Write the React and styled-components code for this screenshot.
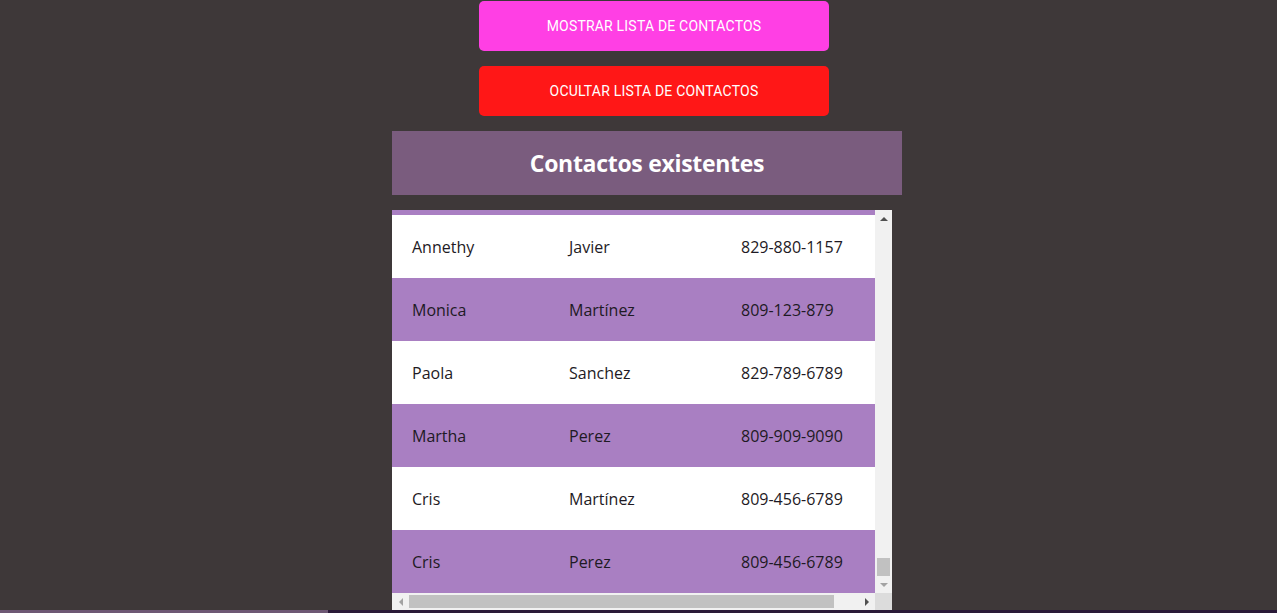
import { useEffect, useRef } from 'react';
import styled, { createGlobalStyle, css } from 'styled-components';

const contactos = [
  { nombre: 'Annethy', apellido: 'Javier', telefono: '829-880-1157' },
  { nombre: 'Monica', apellido: 'Martínez', telefono: '809-123-879' },
  { nombre: 'Paola', apellido: 'Sanchez', telefono: '829-789-6789' },
  { nombre: 'Martha', apellido: 'Perez', telefono: '809-909-9090' },
  { nombre: 'Cris', apellido: 'Martínez', telefono: '809-456-6789' },
  { nombre: 'Cris', apellido: 'Perez', telefono: '809-456-6789' },
];

// la lista se repite muchas veces, como en la captura (barra de scroll mínima)
const filas = [];
for (let i = 0; i < 21; i++) {
  filas.push(...contactos);
}

export default function App() {
  const scrollRef = useRef(null);

  useEffect(() => {
    if (scrollRef.current) {
      scrollRef.current.scrollTop = scrollRef.current.scrollHeight;
      scrollRef.current.scrollLeft = 0;
    }
  }, []);

  return (
    <>
      <GlobalStyle />
      <Page>
        <Column>
          <Boton color="#ff3fe4">Mostrar lista de contactos</Boton>
          <Boton color="#ff1717">Ocultar lista de contactos</Boton>
          <Titulo>
            <h1>Contactos existentes</h1>
          </Titulo>
          <ScrollBox>
            <Viewport ref={scrollRef}>
              <Tabla>
                <colgroup>
                  <col style={{ width: 157 }} />
                  <col style={{ width: 172 }} />
                  <col style={{ width: 181 }} />
                </colgroup>
                <tbody>
                  {filas.map((c, i) => (
                    <Fila key={i}>
                      <Celda>{c.nombre}</Celda>
                      <Celda>{c.apellido}</Celda>
                      <Celda>{c.telefono}</Celda>
                    </Fila>
                  ))}
                </tbody>
              </Tabla>
            </Viewport>
            <BarraV>
              <Flecha><Triangulo dir="up" /></Flecha>
              <Pista vertical>
                <ThumbV />
              </Pista>
              <Flecha><Triangulo dir="down" disabled /></Flecha>
            </BarraV>
            <BarraH>
              <Flecha><Triangulo dir="left" disabled /></Flecha>
              <Pista>
                <ThumbH />
              </Pista>
              <Flecha><Triangulo dir="right" /></Flecha>
            </BarraH>
            <Esquina />
          </ScrollBox>
        </Column>
        <Footer>
          <FooterIzq />
          <FooterDer />
        </Footer>
      </Page>
    </>
  );
}

const GlobalStyle = createGlobalStyle`
  * {
    box-sizing: border-box;
  }
  html, body {
    margin: 0;
    padding: 0;
    background-color: #3e3839;
    overflow: hidden;
  }
`;

const Page = styled.div`
  display: flex;
  flex-direction: column;
  padding-top: 1px;
  min-height: 613px;
`;

const Column = styled.div`
  width: 510px;
  margin-left: 392px;
  display: flex;
  flex-direction: column;
  gap: 15px;
`;

const Boton = styled.button`
  width: 350px;
  height: 50px;
  margin-left: 87px;
  border: none;
  border-radius: 5px;
  background-color: ${(props) => props.color};
  color: #ffffff;
  font-family: 'Roboto', sans-serif;
  font-size: 14px;
  font-weight: 400;
  letter-spacing: 0.2px;
  text-transform: uppercase;
  cursor: pointer;
`;

const Titulo = styled.div`
  width: 510px;
  height: 64px;
  background-color: #7a5c7e;
  display: flex;
  align-items: center;
  justify-content: center;

  h1 {
    margin: 0;
    font-family: 'Open Sans', sans-serif;
    font-weight: 700;
    font-size: 23px;
    color: #ffffff;
    letter-spacing: -0.3px;
  }
`;

const ScrollBox = styled.div`
  width: 500px;
  height: 400px;
  display: grid;
  grid-template-columns: 483px 17px;
  grid-template-rows: 383px 17px;
  background-color: #f1f1f1;
`;

const Viewport = styled.div`
  overflow: hidden;
  background-color: #ffffff;
`;

const BarraV = styled.div`
  display: flex;
  flex-direction: column;
  background-color: #f1f1f1;
`;

const BarraH = styled.div`
  display: flex;
  background-color: #f1f1f1;
`;

const Esquina = styled.div`
  background-color: #dcdcdc;
`;

const Flecha = styled.div`
  width: 17px;
  height: 17px;
  flex-shrink: 0;
  display: flex;
  align-items: center;
  justify-content: center;
`;

const Triangulo = styled.span`
  width: 0;
  height: 0;
  ${(props) => {
    const color = props.disabled ? '#a3a3a3' : '#505050';
    switch (props.dir) {
      case 'up':
        return css`
          border-left: 4px solid transparent;
          border-right: 4px solid transparent;
          border-bottom: 4px solid ${color};
        `;
      case 'down':
        return css`
          border-left: 4px solid transparent;
          border-right: 4px solid transparent;
          border-top: 4px solid ${color};
        `;
      case 'left':
        return css`
          border-top: 4px solid transparent;
          border-bottom: 4px solid transparent;
          border-right: 4px solid ${color};
        `;
      default:
        return css`
          border-top: 4px solid transparent;
          border-bottom: 4px solid transparent;
          border-left: 4px solid ${color};
        `;
    }
  }}
`;

const Pista = styled.div`
  flex: 1;
  display: flex;
  flex-direction: ${(props) => (props.vertical ? 'column' : 'row')};
  justify-content: ${(props) => (props.vertical ? 'flex-end' : 'flex-start')};
`;

const ThumbV = styled.div`
  height: 18px;
  margin: 0 2px;
  background-color: #c1c1c1;
`;

const ThumbH = styled.div`
  width: 425px;
  margin: 2px 0;
  background-color: #c1c1c1;
`;

const Tabla = styled.table`
  width: 510px;
  border-collapse: collapse;
  table-layout: fixed;
`;

const Fila = styled.tr`
  background-color: #ffffff;

  &:nth-child(even) {
    background-color: #a97fc2;
  }
`;

const Celda = styled.td`
  height: 63px;
  padding: 0 20px;
  font-family: 'Open Sans', sans-serif;
  font-size: 16px;
  color: #1e1a24;
  white-space: nowrap;
`;

const Footer = styled.div`
  display: flex;
  height: 3px;
`;

const FooterIzq = styled.div`
  width: 328px;
  background-color: #6e5874;
`;

const FooterDer = styled.div`
  flex: 1;
  background-color: #2a1a38;
`;
